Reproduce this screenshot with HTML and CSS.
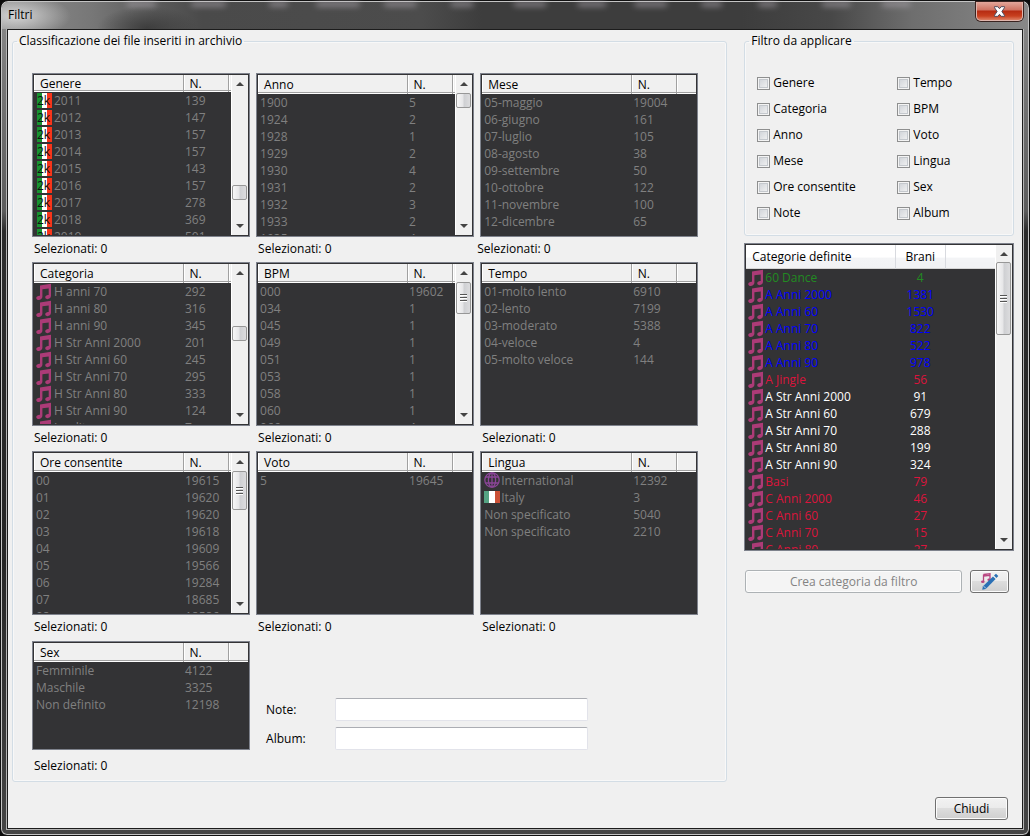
FILE: index.html
```html
<!DOCTYPE html>
<html lang="it">
<head>
<meta charset="utf-8">
<title>Filtri</title>
<link rel="stylesheet" href="styles.css">
</head>
<body>
<svg class="defs" aria-hidden="true">
  <symbol id="note" viewBox="0 0 16 17"><path d="M4 2.400 15 .8v12c0 3.300-4.600 4.400-5.600 2.200-.7-2 1.400-3.400 3.300-3V5.400L6.400 6.200v7.600c0 3.200-5 4.100-6 1.900-.7-2 1.600-3.300 3.600-3z" fill="#ac3b77"/></symbol>
  <symbol id="it" viewBox="0 0 16 12"><path d="M0 0h6v12H0z" fill="#55a383"/><path d="M5 0h6v12H5z" fill="#fff"/><path d="M11 0h5v12h-5z" fill="#cb5036"/></symbol>
  <symbol id="globe" viewBox="0 0 16 16"><g fill="none" stroke="#8b4698" stroke-width="1.300"><circle cx="8" cy="8" r="7.200"/><ellipse cx="8" cy="8" rx="3.600" ry="7.200"/><path d="M8 1v14M2 5h12M2 11h12"/></g></symbol>
</svg>
<div class="window">
  <header class="titlebar"><h1>Filtri</h1>
    <svg class="reflections" viewBox="0 0 1028 12" preserveAspectRatio="none" aria-hidden="true"><g fill="none" stroke="#b9b2bb" stroke-width="6"><path d="M125 1h29M190 1h34M268 1h18M315 1h43M383 1h32M450 1h22M513 1h32M577 1h28M634 1h32M701 1h20M758 1h18M822 1h28M882 1h28"/></g></svg>
    <button class="close" aria-label="Chiudi finestra"><svg width="13" height="11" viewBox="0 0 13 11"><path d="M1.500 .7h3.300l1.700 2 1.700-2h3.300v1L8.900 5.500l2.600 3.800v1H8.200l-1.700-2-1.700 2H1.500v-1l2.600-3.800-2.600-3.800z" fill="#fff" stroke="#4d4a5c"/></svg></button>
  </header>
  <div class="client">
    <main class="panes">
      <fieldset class="group archive">
        <legend>Classificazione dei file inseriti in archivio</legend>
        <div class="lists">
          <section>
            <div class="list short"><div class="view"><table>
              <thead><tr><th>Genere</th><th>N.</th><th></th></tr></thead>
              <tbody>
                <tr><td><span class="flag2k">2k</span>2011</td><td>139</td></tr>
                <tr><td><span class="flag2k">2k</span>2012</td><td>147</td></tr>
                <tr><td><span class="flag2k">2k</span>2013</td><td>157</td></tr>
                <tr><td><span class="flag2k">2k</span>2014</td><td>157</td></tr>
                <tr><td><span class="flag2k">2k</span>2015</td><td>143</td></tr>
                <tr><td><span class="flag2k">2k</span>2016</td><td>157</td></tr>
                <tr><td><span class="flag2k">2k</span>2017</td><td>278</td></tr>
                <tr><td><span class="flag2k">2k</span>2018</td><td>369</td></tr>
                <tr><td><span class="flag2k">2k</span>2019</td><td>501</td></tr>
              </tbody></table></div>
              <div class="scroll"><i class="up"></i><i class="thumb" style="margin-top:93px"></i><i class="down"></i></div></div>
            <p>Selezionati: 0</p>
          </section>
          <section>
            <div class="list"><div class="view"><table>
              <thead><tr><th>Anno</th><th>N.</th><th></th></tr></thead>
              <tbody>
                <tr><td>1900</td><td>5</td></tr>
                <tr><td>1924</td><td>2</td></tr>
                <tr><td>1928</td><td>1</td></tr>
                <tr><td>1929</td><td>2</td></tr>
                <tr><td>1930</td><td>4</td></tr>
                <tr><td>1931</td><td>2</td></tr>
                <tr><td>1932</td><td>3</td></tr>
                <tr><td>1933</td><td>2</td></tr>
                <tr><td>1935</td><td>4</td></tr>
              </tbody></table></div>
              <div class="scroll"><i class="up"></i><i class="thumb" style="margin-top:1px"></i><i class="down"></i></div></div>
            <p>Selezionati: 0</p>
          </section>
          <section class="mese">
            <div class="list"><div class="view"><table>
              <thead><tr><th>Mese</th><th>N.</th><th></th></tr></thead>
              <tbody>
                <tr><td>05-maggio</td><td>19004</td></tr>
                <tr><td>06-giugno</td><td>161</td></tr>
                <tr><td>07-luglio</td><td>105</td></tr>
                <tr><td>08-agosto</td><td>38</td></tr>
                <tr><td>09-settembre</td><td>50</td></tr>
                <tr><td>10-ottobre</td><td>122</td></tr>
                <tr><td>11-novembre</td><td>100</td></tr>
                <tr><td>12-dicembre</td><td>65</td></tr>
              </tbody></table></div></div>
            <p>Selezionati: 0</p>
          </section>
          <section>
            <div class="list"><div class="view"><table>
              <thead><tr><th>Categoria</th><th>N.</th><th></th></tr></thead>
              <tbody>
                <tr><td><svg class="note"><use href="#note"/></svg>H anni 70</td><td>292</td></tr>
                <tr><td><svg class="note"><use href="#note"/></svg>H anni 80</td><td>316</td></tr>
                <tr><td><svg class="note"><use href="#note"/></svg>H anni 90</td><td>345</td></tr>
                <tr><td><svg class="note"><use href="#note"/></svg>H Str Anni 2000</td><td>201</td></tr>
                <tr><td><svg class="note"><use href="#note"/></svg>H Str Anni 60</td><td>245</td></tr>
                <tr><td><svg class="note"><use href="#note"/></svg>H Str Anni 70</td><td>295</td></tr>
                <tr><td><svg class="note"><use href="#note"/></svg>H Str Anni 80</td><td>333</td></tr>
                <tr><td><svg class="note"><use href="#note"/></svg>H Str Anni 90</td><td>124</td></tr>
                <tr><td><svg class="note"><use href="#note"/></svg>Inedito</td><td>7</td></tr>
              </tbody></table></div>
              <div class="scroll"><i class="up"></i><i class="thumb" style="margin-top:45px"></i><i class="down"></i></div></div>
            <p>Selezionati: 0</p>
          </section>
          <section>
            <div class="list"><div class="view"><table>
              <thead><tr><th>BPM</th><th>N.</th><th></th></tr></thead>
              <tbody>
                <tr><td>000</td><td>19602</td></tr>
                <tr><td>034</td><td>1</td></tr>
                <tr><td>045</td><td>1</td></tr>
                <tr><td>049</td><td>1</td></tr>
                <tr><td>051</td><td>1</td></tr>
                <tr><td>053</td><td>1</td></tr>
                <tr><td>058</td><td>1</td></tr>
                <tr><td>060</td><td>1</td></tr>
                <tr><td>066</td><td>4</td></tr>
              </tbody></table></div>
              <div class="scroll"><i class="up"></i><i class="thumb grip" style="height:32px;margin-top:1px"></i><i class="down"></i></div></div>
            <p>Selezionati: 0</p>
          </section>
          <section>
            <div class="list"><div class="view"><table>
              <thead><tr><th>Tempo</th><th>N.</th><th></th></tr></thead>
              <tbody>
                <tr><td>01-molto lento</td><td>6910</td></tr>
                <tr><td>02-lento</td><td>7199</td></tr>
                <tr><td>03-moderato</td><td>5388</td></tr>
                <tr><td>04-veloce</td><td>4</td></tr>
                <tr><td>05-molto veloce</td><td>144</td></tr>
              </tbody></table></div></div>
            <p>Selezionati: 0</p>
          </section>
          <section>
            <div class="list"><div class="view"><table>
              <thead><tr><th>Ore consentite</th><th>N.</th><th></th></tr></thead>
              <tbody>
                <tr><td>00</td><td>19615</td></tr>
                <tr><td>01</td><td>19620</td></tr>
                <tr><td>02</td><td>19620</td></tr>
                <tr><td>03</td><td>19618</td></tr>
                <tr><td>04</td><td>19609</td></tr>
                <tr><td>05</td><td>19566</td></tr>
                <tr><td>06</td><td>19284</td></tr>
                <tr><td>07</td><td>18685</td></tr>
                <tr><td>08</td><td>18586</td></tr>
              </tbody></table></div>
              <div class="scroll"><i class="up"></i><i class="thumb grip" style="height:39px;margin-top:1px"></i><i class="down"></i></div></div>
            <p>Selezionati: 0</p>
          </section>
          <section>
            <div class="list"><div class="view"><table>
              <thead><tr><th>Voto</th><th>N.</th><th></th></tr></thead>
              <tbody>
                <tr><td>5</td><td>19645</td></tr>
              </tbody></table></div></div>
            <p>Selezionati: 0</p>
          </section>
          <section>
            <div class="list"><div class="view"><table>
              <thead><tr><th>Lingua</th><th>N.</th><th></th></tr></thead>
              <tbody>
                <tr><td><svg class="globe"><use href="#globe"/></svg>International</td><td>12392</td></tr>
                <tr><td><svg class="it"><use href="#it"/></svg>Italy</td><td>3</td></tr>
                <tr><td>Non specificato</td><td>5040</td></tr>
                <tr><td>Non specificato</td><td>2210</td></tr>
              </tbody></table></div></div>
            <p>Selezionati: 0</p>
          </section>
          <section class="sex">
            <div class="list low"><div class="view"><table>
              <thead><tr><th>Sex</th><th>N.</th><th></th></tr></thead>
              <tbody>
                <tr><td>Femminile</td><td>4122</td></tr>
                <tr><td>Maschile</td><td>3325</td></tr>
                <tr><td>Non definito</td><td>12198</td></tr>
              </tbody></table></div></div>
            <p>Selezionati: 0</p>
          </section>
          <div class="fields">
            <label for="f-note">Note:</label><input id="f-note" type="text">
            <label for="f-album">Album:</label><input id="f-album" type="text">
          </div>
        </div>
      </fieldset>
      <aside>
        <fieldset class="group filter">
          <legend>Filtro da applicare</legend>
          <div class="checks">
            <label><input type="checkbox">Genere</label><label><input type="checkbox">Tempo</label>
            <label><input type="checkbox">Categoria</label><label><input type="checkbox">BPM</label>
            <label><input type="checkbox">Anno</label><label><input type="checkbox">Voto</label>
            <label><input type="checkbox">Mese</label><label><input type="checkbox">Lingua</label>
            <label><input type="checkbox">Ore consentite</label><label><input type="checkbox">Sex</label>
            <label><input type="checkbox">Note</label><label><input type="checkbox">Album</label>
          </div>
        </fieldset>
        <div class="list defined"><div class="view"><table>
          <thead><tr><th>Categorie definite</th><th>Brani</th><th></th></tr></thead>
          <tbody>
            <tr class="green"><td><svg class="note"><use href="#note"/></svg>60 Dance</td><td>4</td></tr>
            <tr class="blue"><td><svg class="note"><use href="#note"/></svg>A Anni 2000</td><td>1381</td></tr>
            <tr class="blue"><td><svg class="note"><use href="#note"/></svg>A Anni 60</td><td>1530</td></tr>
            <tr class="blue"><td><svg class="note"><use href="#note"/></svg>A Anni 70</td><td>822</td></tr>
            <tr class="blue"><td><svg class="note"><use href="#note"/></svg>A Anni 80</td><td>522</td></tr>
            <tr class="blue"><td><svg class="note"><use href="#note"/></svg>A Anni 90</td><td>978</td></tr>
            <tr class="red"><td><svg class="note"><use href="#note"/></svg>A Jingle</td><td>56</td></tr>
            <tr><td><svg class="note"><use href="#note"/></svg>A Str Anni 2000</td><td>91</td></tr>
            <tr><td><svg class="note"><use href="#note"/></svg>A Str Anni 60</td><td>679</td></tr>
            <tr><td><svg class="note"><use href="#note"/></svg>A Str Anni 70</td><td>288</td></tr>
            <tr><td><svg class="note"><use href="#note"/></svg>A Str Anni 80</td><td>199</td></tr>
            <tr><td><svg class="note"><use href="#note"/></svg>A Str Anni 90</td><td>324</td></tr>
            <tr class="red"><td><svg class="note"><use href="#note"/></svg>Basi</td><td>79</td></tr>
            <tr class="red"><td><svg class="note"><use href="#note"/></svg>C Anni 2000</td><td>46</td></tr>
            <tr class="red"><td><svg class="note"><use href="#note"/></svg>C Anni 60</td><td>27</td></tr>
            <tr class="red"><td><svg class="note"><use href="#note"/></svg>C Anni 70</td><td>15</td></tr>
            <tr class="red"><td><svg class="note"><use href="#note"/></svg>C Anni 80</td><td>27</td></tr>
          </tbody></table></div>
          <div class="scroll"><i class="up"></i><i class="thumb grip" style="height:73px"></i><i class="down"></i></div></div>
        <div class="actions">
          <button class="btn create" disabled>Crea categoria da filtro</button>
          <button class="btn edit" aria-label="Modifica categoria"><svg width="18" height="18" viewBox="0 0 18 18"><path d="M2.500 1.500 9 .8v5.400M2.500 1.500v7M2.500 3 9 2.300" fill="none" stroke="#b84580" stroke-width="1.300"/><ellipse cx="1.800" cy="8.700" rx="1.800" ry="1.300" fill="#b84580"/><ellipse cx="8" cy="6.800" rx="1.600" ry="1.200" fill="#b84580"/><path d="M1.200 16.800l.8-3.600L12 3.500l2.600 2.600L4.800 15.900z" fill="#2a70b5"/><path d="M13 2.600 15 .8l2.300 2.300-1.900 2z" fill="#2a70b5"/><path d="M2.700 13.200l2.200 2.200" stroke="#eee" stroke-width=".8"/></svg></button>
        </div>
      </aside>
    </main>
    <footer><button class="btn done">Chiudi</button></footer>
  </div>
</div>
</body>
</html>
```
FILE: styles.css
```css
* { box-sizing: border-box; }
body { margin: 0; background: #0b0b0b; color: #000; font: 12px/16px "Open Sans", "Noto Sans", sans-serif; }
button, input { font: inherit; color: inherit; }
.defs { display: none; }

.window {
  min-height: 100vh; display: flex; flex-direction: column; padding: 0 6px 6px;
  border: 1px solid #111; border-radius: 8px 8px 7px 7px;
  background: linear-gradient(#8c8c8c, #777 80px, #5c5c5c 210px, #2c2c2c 230px, #262626 560px, #454545);
  box-shadow: inset 0 0 0 1px #c4c4c4;
}
.titlebar {
  position: relative;
  display: flex; justify-content: space-between; height: 27px; margin: 1px -5px 0; padding-left: 6px; border-radius: 6px 6px 0 0;
  background:
    radial-gradient(ellipse 55px 22px at 14px 14px, #dddddde0, #ddd0),
    radial-gradient(ellipse 50px 22px at 145px 26px, #333333c0, #3330),
    linear-gradient(90deg, #8e8e8e, #777 90px, #5c5c5c 150px, #4a4a4a 200px, #4c4c4c 420px, #3d3d3d 480px, #3d3d3d 740px, #484848 830px, #6e6e6e 910px, #888);
}
.titlebar h1 { margin: 5px 0 0; font-size: 12px; font-weight: 400; }
.reflections { position: absolute; top: 0; left: 0; width: 100%; height: 12px; filter: blur(3px); opacity: .7; }
.close {
  position: relative;
  width: 47px; height: 19px; margin-right: 5px; padding: 0; display: grid; place-items: center;
  border: 1px solid #e0b5ac; border-top: 0; border-radius: 0 0 5px 5px;
  background: linear-gradient(#e3a79b, #cf7261 8px, #b62b12 9px, #c8401f 14px, #dd8064);
  box-shadow: 0 0 0 1px #3a2320;
}

.client { flex: 1; display: flex; flex-direction: column; padding: 3px 8px 8px 4px; background: #f0f0f0; border: 1px solid #1c1c1c; outline: 1px solid #b4b4b4; }
.panes { flex: 1; display: grid; grid-template-columns: minmax(0, 716fr) minmax(0, 270fr); gap: 17px; align-items: start; }
.group { min-width: 0; margin: 0; padding: 0; border: 1px solid #d3dde5; border-radius: 3px; box-shadow: inset 0 0 0 1px #fff8; }
.group legend { margin-left: 4px; padding: 0 2px; line-height: 16px; }

.archive .lists { padding: 24px 28px 2px 19px; }
.lists { display: grid; grid-template-columns: repeat(3, minmax(0, 1fr)); column-gap: 6px; }
.lists p { margin: 0; padding: 4px 0 5px 2px; }
.lists .mese p { padding-left: 0; text-indent: -3px; }
.sex { padding-top: 1px; }
.lists .sex p { padding-top: 8px; }

.list { display: flex; height: 164px; border: 1px solid #7e828c; background: #333335; padding: 1px; }
.view { flex: 1; overflow: hidden; min-width: 0; }
table { width: 100%; table-layout: fixed; border-collapse: collapse; color: #808080; }
thead { color: #000; }
th { height: 19px; padding: 0 0 0 6px; font-weight: 400; text-align: left; background: #f0f0f0; border-right: 1px solid #a0a0a0; box-shadow: inset 0 -1px #fff, inset 0 -2px #a0a0a0, inset 1px 0 #fff; line-height: 16px; }
th:first-child { width: 149px; }
th:nth-child(2) { width: 45px; }
th:last-child { border-right: 0; }
.short th { height: 17px; line-height: 15px; }
td { height: 17px; padding: 0 0 0 2px; line-height: 17px; white-space: nowrap; }
td svg, .flag2k { display: inline-block; vertical-align: top; }
td .note { width: 16px; height: 17px; margin-right: 2px; }
td .globe { width: 16px; height: 16px; margin-right: 1px; }
td .it { width: 16px; height: 12px; margin: 2px 1px 0 0; }
.flag2k { width: 15px; height: 15px; margin: 1px 2px 0 1px; color: #111; font-size: 12px; line-height: 15px; background: linear-gradient(90deg, #179330 5px, #fff 5px, #fff 10px, #f8351a 10px); }
.low { height: 109px; }

.scroll { width: 17px; display: flex; flex-direction: column; align-items: center; background: #f0f0f0; box-shadow: inset 1px 0 #fff; }
.up, .down { width: 0; height: 0; border: 4px solid transparent; flex: none; }
.up { border-top-width: 0; border-bottom-color: #444; margin: 7px 0 6px; }
.down { border-bottom-width: 0; border-top-color: #444; margin: auto 0 7px; }
.thumb { width: 15px; height: 15px; flex: none; border: 1px solid #979797; border-radius: 2px; background: linear-gradient(90deg, #f7f7f7, #e6e6e8 45%, #cfd0d3 55%, #dcdcde); display: grid; place-items: center; }
.grip::after { content: ""; width: 7px; height: 8px; background: repeating-linear-gradient(#555 0 1px, #fff 1px 2px, transparent 2px 3px); }

.fields { grid-column: span 2; display: grid; grid-template-columns: 69px minmax(0, 253px); grid-auto-rows: 23px; row-gap: 6px; align-items: center; align-content: start; padding: 58px 0 0 10px; }
.fields input { height: 23px; width: 100%; border: 1px solid #e2e3ea; border-top-color: #abadb3; border-radius: 2px; background: #fff; }

.filter { height: 203px; }
.checks { display: grid; grid-template-columns: 140px 1fr; grid-auto-rows: 26px; align-items: center; padding: 21px 0 0 12px; }
.checks label { display: flex; align-items: center; gap: 3px; }
.checks input { appearance: none; width: 13px; height: 13px; margin: 0; border: 1px solid #8e8f8f; background: linear-gradient(135deg, #cbcfd5, #f6f6f6); box-shadow: inset 0 0 0 1px #f4f4f4, inset 0 0 0 2px #c4c8cd; }
.defined { height: 308px; margin-top: 7px; }
.defined table { color: #fff; }
.defined thead { color: #000; }
.defined th { height: 24px; background: linear-gradient(#fff 50%, #f3f4f6 55%, #f1f2f4); border-right-color: #d8dadf; box-shadow: inset 0 -1px #d5d5d5; }
.defined th:nth-child(2), .defined td:nth-child(2) { width: 50px; padding: 0; text-align: center; }
.defined td .note { margin-right: 1px; }
.green td { color: #228b22; }
.blue td { color: #00f; }
.red td { color: #dc143c; }

.actions { display: flex; gap: 8px; margin: 19px 5px 0 1px; }
.btn { height: 23px; padding: 0; border: 1px solid #707070; border-radius: 3px; background: linear-gradient(#f2f2f2, #ebebeb 48%, #ddd 50%, #cfcfcf); box-shadow: inset 0 0 0 1px #fcfcfc; }
.create { flex: 1; color: #838383; border-color: #adb2b5; background: #f4f4f4; }
.edit { width: 39px; display: grid; place-items: center; }
footer { display: flex; justify-content: flex-end; padding-right: 6px; }
.done { width: 73px; }
```
